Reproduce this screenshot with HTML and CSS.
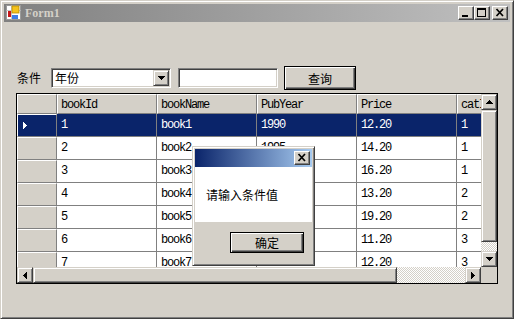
FILE: index.html
```html
<!DOCTYPE html>
<html>
<head>
  <title>Form1</title>
  <link rel="stylesheet" href="styles.css">
</head>
<body>
  <div class="window">
    <div class="titlebar">
      <svg class="app-icon" width="16" height="16" viewBox="0 0 16 16">
        <rect x="0.5" y="0.5" width="14" height="14" fill="#fff" stroke="#9a9a9a"/>
        <path d="M0.5 5.5h14M5.5 0.5v14" stroke="#c8c8c8"/>
        <rect x="2" y="6" width="3" height="6" fill="#c81818"/>
        <rect x="6" y="1" width="7" height="7" fill="#f4c21c" stroke="#b88a00" stroke-width="0.8"/>
        <rect x="6" y="10" width="6" height="4" fill="#3c7ce8"/>
      </svg>
      <span class="title">Form1</span>
      <div class="caption-buttons">
        <button class="cap-btn" type="button">
          <svg width="12" height="10" viewBox="0 0 12 10"><rect x="2" y="7" width="6" height="2"/></svg>
        </button>
        <button class="cap-btn" type="button">
          <svg width="12" height="10" viewBox="0 0 12 10"><path fill-rule="evenodd" d="M1 0h9v9h-9z M2 2v6h7v-6z"/></svg>
        </button>
        <button class="cap-btn cap-close" type="button">
          <svg width="12" height="10" viewBox="0 0 12 10"><path d="M2.5 1L9 8M9 1L2.5 8" stroke="#000" stroke-width="1.7"/></svg>
        </button>
      </div>
    </div>

    <div class="client">
      <div class="search-bar">
        <label class="field-label" for="keyword">条件</label>
        <div class="combo">
          <span class="combo-text">年份</span>
          <span class="sb-btn combo-btn">
            <svg width="7" height="4" viewBox="0 0 7 4"><path d="M0 0h7v1h-7z M1 1h5v1h-5z M2 2h3v1h-3z M3 3h1v1h-1z"/></svg>
          </span>
        </div>
        <input class="textbox" type="text" id="keyword">
        <button class="btn btn-default" type="button">查询</button>
      </div>

      <div class="grid">
        <div class="grid-view">
          <div class="grid-row grid-head">
            <div class="cell row-head"></div>
            <div class="cell">bookId</div>
            <div class="cell">bookName</div>
            <div class="cell">PubYear</div>
            <div class="cell">Price</div>
            <div class="cell">catId</div>
          </div>
          <div class="grid-row selected">
            <div class="cell row-head">
              <svg width="4" height="7" viewBox="0 0 4 7"><path fill="#fff" d="M0 0h1v7h-1z M1 1h1v5h-1z M2 2h1v3h-1z M3 3h1v1h-1z"/></svg>
            </div>
            <div class="cell">1</div><div class="cell">book1</div><div class="cell">1990</div><div class="cell">12.20</div><div class="cell">1</div>
          </div>
          <div class="grid-row">
            <div class="cell row-head"></div>
            <div class="cell">2</div><div class="cell">book2</div><div class="cell">1995</div><div class="cell">14.20</div><div class="cell">1</div>
          </div>
          <div class="grid-row">
            <div class="cell row-head"></div>
            <div class="cell">3</div><div class="cell">book3</div><div class="cell">1996</div><div class="cell">16.20</div><div class="cell">1</div>
          </div>
          <div class="grid-row">
            <div class="cell row-head"></div>
            <div class="cell">4</div><div class="cell">book4</div><div class="cell">1993</div><div class="cell">13.20</div><div class="cell">2</div>
          </div>
          <div class="grid-row">
            <div class="cell row-head"></div>
            <div class="cell">5</div><div class="cell">book5</div><div class="cell">1997</div><div class="cell">19.20</div><div class="cell">2</div>
          </div>
          <div class="grid-row">
            <div class="cell row-head"></div>
            <div class="cell">6</div><div class="cell">book6</div><div class="cell">1991</div><div class="cell">11.20</div><div class="cell">3</div>
          </div>
          <div class="grid-row">
            <div class="cell row-head"></div>
            <div class="cell">7</div><div class="cell">book7</div><div class="cell">1998</div><div class="cell">12.20</div><div class="cell">3</div>
          </div>
        </div>

        <div class="vscroll">
          <span class="sb-btn">
            <svg width="7" height="4" viewBox="0 0 7 4"><path d="M3 0h1v1h-1z M2 1h3v1h-3z M1 2h5v1h-5z M0 3h7v1h-7z"/></svg>
          </span>
          <span class="sb-thumb vthumb"></span>
          <span class="sb-track"></span>
          <span class="sb-btn">
            <svg width="7" height="4" viewBox="0 0 7 4"><path d="M0 0h7v1h-7z M1 1h5v1h-5z M2 2h3v1h-3z M3 3h1v1h-1z"/></svg>
          </span>
        </div>
        <div class="hscroll">
          <span class="sb-btn">
            <svg width="4" height="7" viewBox="0 0 4 7"><path d="M3 0h1v7h-1z M2 1h1v5h-1z M1 2h1v3h-1z M0 3h1v1h-1z"/></svg>
          </span>
          <span class="sb-thumb hthumb"></span>
          <span class="sb-track"></span>
          <span class="sb-btn">
            <svg width="4" height="7" viewBox="0 0 4 7"><path d="M0 0h1v7h-1z M1 1h1v5h-1z M2 2h1v3h-1z M3 3h1v1h-1z"/></svg>
          </span>
        </div>
        <div class="corner"></div>
      </div>
    </div>

    <!-- message box shown on top of the form -->
    <div class="msgbox">
      <div class="msg-title">
        <button class="cap-btn" type="button">
          <svg width="12" height="10" viewBox="0 0 12 10"><path d="M2.5 1L9 8M9 1L2.5 8" stroke="#000" stroke-width="1.7"/></svg>
        </button>
      </div>
      <div class="msg-body">请输入条件值</div>
      <div class="msg-foot">
        <button class="btn btn-default msg-ok" type="button">确定</button>
      </div>
    </div>
  </div>
</body>
</html>
```

FILE: styles.css
```css
body {
  margin: 0;
  background: #d4d0c8;
  font-family: "Noto Sans CJK SC", "Liberation Sans", sans-serif;
  font-size: 12px;
  color: #000;
}

.window {
  position: relative;
  box-sizing: border-box;
  width: 514px;
  height: 319px;
  padding: 3px;
  background: #d4d0c8;
  border: 1px solid;
  border-color: #d4d0c8 #404040 #404040 #d4d0c8;
  box-shadow: inset 1px 1px #fff, inset -1px -1px #808080;
  display: flex;
  flex-direction: column;
}

.titlebar {
  height: 18px;
  display: flex;
  align-items: center;
  padding: 0 2px 0 2px;
  background: linear-gradient(to right, #808080, #c0c0c0);
}

.app-icon {
  flex: none;
}

.title {
  margin-left: 3px;
  font: bold 12px "Liberation Serif", serif;
  color: #d4d0c8;
}

.caption-buttons {
  margin-left: auto;
  display: flex;
}

.cap-btn {
  box-sizing: border-box;
  width: 16px;
  height: 14px;
  padding: 0;
  margin: 0;
  background: #d4d0c8;
  border: 1px solid;
  border-color: #fff #404040 #404040 #fff;
  box-shadow: inset -1px -1px #808080;
  display: flex;
  align-items: center;
  justify-content: center;
}

.cap-close {
  margin-left: 2px;
}

.client {
  flex: 1;
  padding: 0 12px;
  display: flex;
  flex-direction: column;
}

.search-bar {
  margin-top: 44px;
  height: 24px;
  padding-left: 1px;
  display: flex;
  align-items: center;
}

.field-label {
  width: 24px;
  margin-right: 10px;
  line-height: 16px;
}

.combo,
.textbox {
  box-sizing: border-box;
  height: 20px;
  background: #fff;
  border: 1px solid;
  border-color: #808080 #fff #fff #808080;
  box-shadow: inset 1px 1px #404040, inset -1px -1px #d4d0c8;
}

.combo {
  width: 120px;
  margin-right: 7px;
  padding: 1px;
  display: flex;
}

.combo-text {
  flex: 1;
  padding-left: 2px;
  line-height: 16px;
}

.textbox {
  width: 100px;
  margin: 0 6px 0 0;
  padding: 0 2px;
  font: inherit;
  outline: none;
}

.btn {
  box-sizing: border-box;
  width: 72px;
  height: 24px;
  margin: 0;
  padding: 0;
  font: inherit;
  color: #000;
  background: #d4d0c8;
  border: 1px solid;
  border-color: #fff #404040 #404040 #fff;
  box-shadow: inset -1px -1px #808080;
}

.btn-default {
  border-color: #000;
  box-shadow: inset 1px 1px #fff, inset -1px -1px #404040, inset -2px -2px #808080;
}

/* data grid */
.grid {
  margin-top: 3px;
  box-sizing: border-box;
  width: 482px;
  height: 191px;
  border: 1px solid #000;
  display: grid;
  grid-template-columns: 464px 16px;
  grid-template-rows: 173px 16px;
}

.grid-view {
  overflow: hidden;
  background: #808080;
  font: 12px "Liberation Mono", monospace;
  letter-spacing: -1.2px;
}

.grid-row {
  display: flex;
  height: 23px;
}

.grid-head {
  height: 20px;
}

.cell {
  flex: none;
  box-sizing: border-box;
  width: 100px;
  height: 100%;
  padding-left: 4px;
  background: #fff;
  border-right: 1px solid #808080;
  border-bottom: 1px solid #808080;
  display: flex;
  align-items: center;
  white-space: nowrap;
  overflow: hidden;
}

.grid-head .cell {
  padding: 2px 0 0 3px;
  background: #d4d0c8;
  border-left: 1px solid #fff;
  border-top: 1px solid #fff;
}

.cell.row-head {
  width: 40px;
  padding-left: 5px;
  background: #d4d0c8;
  border-left: 1px solid #fff;
  border-top: 1px solid #fff;
}

.selected .cell,
.selected .cell.row-head {
  background: #0a246a;
  color: #fff;
}

/* scroll bars */
.vscroll {
  display: flex;
  flex-direction: column;
}

.hscroll {
  display: flex;
}

.sb-btn,
.sb-thumb {
  flex: none;
  box-sizing: border-box;
  background: #d4d0c8;
  border: 1px solid;
  border-color: #d4d0c8 #404040 #404040 #d4d0c8;
  box-shadow: inset 1px 1px #fff, inset -1px -1px #808080;
}

.sb-btn {
  width: 16px;
  height: 16px;
  display: flex;
  align-items: center;
  justify-content: center;
}

.vthumb {
  height: 132px;
}

.hthumb {
  width: 364px;
}

.sb-track {
  flex: 1;
  background-image: repeating-conic-gradient(#fff 0 25%, #d4d0c8 0 50%);
  background-size: 2px 2px;
}

.corner {
  background: #d4d0c8;
}

.combo-btn {
  margin-left: auto;
}

/* message box */
.msgbox {
  position: absolute;
  left: 191px;
  top: 145px;
  box-sizing: border-box;
  width: 123px;
  height: 120px;
  padding: 2px;
  background: #d4d0c8;
  border: 1px solid;
  border-color: #d4d0c8 #404040 #404040 #d4d0c8;
  box-shadow: inset 1px 1px #fff, inset -1px -1px #808080;
  display: flex;
  flex-direction: column;
}

.msg-title {
  height: 18px;
  padding-right: 2px;
  background: linear-gradient(to right, #0a246a, #a6caf0);
  display: flex;
  align-items: center;
  justify-content: flex-end;
}

.msg-body {
  height: 55px;
  padding-left: 11px;
  background: #fff;
  display: flex;
  align-items: center;
}

.msg-foot {
  flex: 1;
  padding-right: 8px;
  display: flex;
  align-items: center;
  justify-content: flex-end;
}

.msg-ok {
  width: 74px;
  height: 21px;
}
```
